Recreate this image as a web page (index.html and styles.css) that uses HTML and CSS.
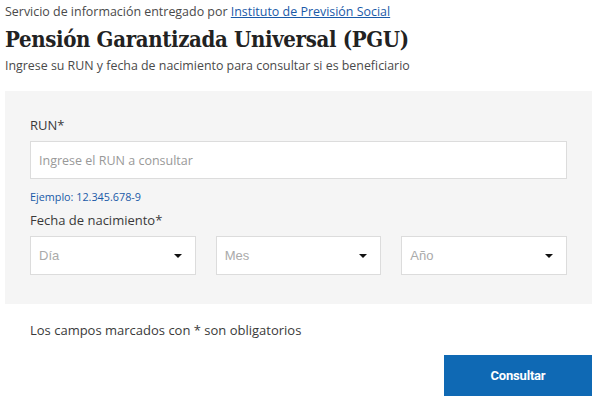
FILE: index.html
```html
<!DOCTYPE html>
<html lang="es">
<head>
<meta charset="utf-8">
<link rel="stylesheet" href="styles.css">
</head>
<body>
<div class="page">
  <p class="source">Servicio de información entregado por <a href="#" class="link">Instituto de Previsión Social</a></p>
  <h1 class="title">Pensión Garantizada Universal (PGU)</h1>
  <p class="lead">Ingrese su RUN y fecha de nacimiento para consultar si es beneficiario</p>

  <div class="panel">
    <label class="label label-run">RUN*</label>
    <div class="input">Ingrese el RUN a consultar</div>
    <p class="hint">Ejemplo: 12.345.678-9</p>
    <label class="label label-date">Fecha de nacimiento*</label>
    <div class="selects">
      <div class="select"><span>Día</span><span class="caret"></span></div>
      <div class="select"><span>Mes</span><span class="caret"></span></div>
      <div class="select"><span>Año</span><span class="caret"></span></div>
    </div>
  </div>

  <p class="required">Los campos marcados con * son obligatorios</p>
  <div class="actions">
    <button class="btn">Consultar</button>
  </div>
</div>
</body>
</html>
```

FILE: styles.css
```css
* { box-sizing: border-box; }
html, body { margin: 0; padding: 0; background: #fff; }
body { font-family: "Open Sans", "DejaVu Sans", sans-serif; color: #3a3a3a; }
.page { padding: 0 6px 0 5px; }
.source { margin: 0; padding-top: 3px; font-size: 12.45px; line-height: 18px; color: #4a4a4a; }
.link { color: #1a5aa8; text-decoration: underline; }
.title { margin: 3px 0 0; font-family: "DejaVu Serif Condensed", "DejaVu Serif", serif; font-stretch: condensed; font-weight: bold; font-size: 22px; line-height: 30px; letter-spacing: -0.35px; color: #222; }
.lead { margin: 3px 0 0; font-size: 12.4px; line-height: 18px; color: #4a4a4a; }
.panel { margin-top: 16px; background: #f5f5f5; padding: 25px 25px 29px 25px; width: 587px; }
.label { display: block; font-size: 13px; line-height: 18px; color: #3a3a3a; }
.input { margin-top: 7px; height: 38px; background: #fff; border: 1px solid #dcdcdc; padding: 0 8px; display: flex; align-items: center; font-size: 12.5px; color: #999; }
.hint { margin: 10px 0 0; font-size: 10.8px; line-height: 16px; color: #1a5aa8; }
.label-date { margin-top: 6px; }
.selects { margin-top: 7px; display: grid; grid-template-columns: 1fr 1fr 1fr; gap: 20px; }
.select { height: 39px; background: #fff; border: 1px solid #dcdcdc; display: flex; align-items: center; justify-content: space-between; padding: 0 13px 0 8px; font-family: "Liberation Sans", Arial, sans-serif; font-size: 13px; color: #aaa; }
.caret { width: 0; height: 0; border-left: 4px solid transparent; border-right: 4px solid transparent; border-top: 4px solid #111; }
.required { margin: 17px 0 0 25px; font-size: 13px; line-height: 18px; color: #3a3a3a; }
.actions { display: flex; justify-content: flex-end; margin-top: 16px; width: 587px; }
.btn { width: 148px; height: 41px; border: 0; background: #0f69b4; color: #fff; font-family: Roboto, sans-serif; font-weight: 700; font-size: 13px; letter-spacing: -0.2px; }
```
